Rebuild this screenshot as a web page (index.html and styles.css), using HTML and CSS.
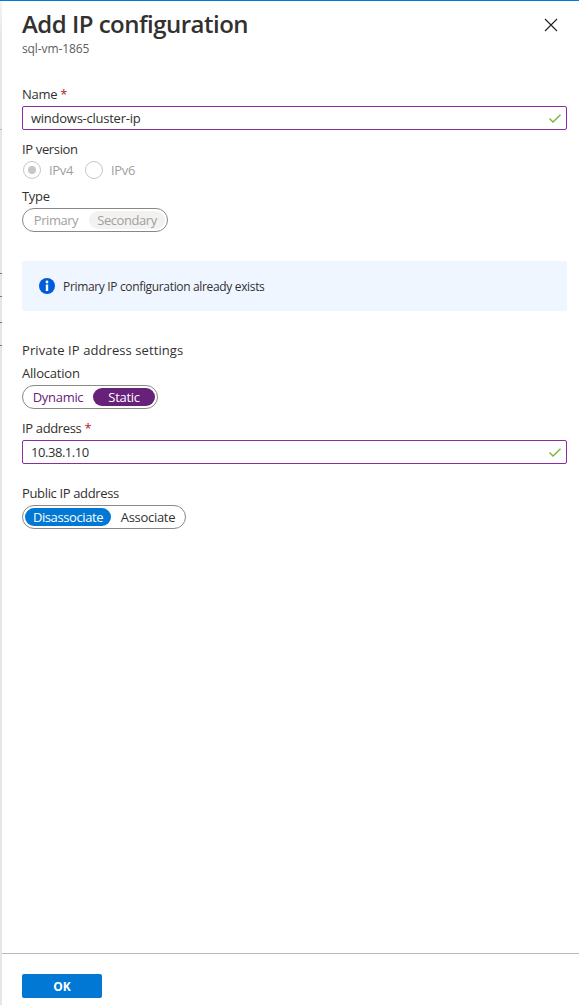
FILE: index.html
```html
<!DOCTYPE html>
<html lang="en">
<head>
<meta charset="utf-8">
<title>Add IP configuration</title>
<link rel="stylesheet" href="styles.css">
</head>
<body>
<div class="shell">
  <div class="underlay"></div>
  <section class="blade">
    <header class="header">
      <div>
        <h1 class="title">Add IP configuration</h1>
        <p class="subtitle">sql-vm-1865</p>
      </div>
      <svg class="close" width="14" height="14" viewBox="0 0 14 14"><path d="M1 1L13 13M13 1L1 13" stroke="#201f1e" stroke-width="1.1" fill="none"/></svg>
    </header>
    <main class="form">
      <label class="label">Name <span class="required">*</span></label>
      <div class="input"><span class="name-value">windows-cluster-ip</span>
        <svg width="12" height="9" viewBox="0 0 12 9"><path d="M.5 4.5L4 8L11.5.7" stroke="#73b532" stroke-width="1.3" fill="none"/></svg>
      </div>
      <div class="label version-label">IP version</div>
      <div class="radios">
        <span class="radio checked"></span><span class="radio-text">IPv4</span>
        <span class="radio"></span><span class="radio-text">IPv6</span>
      </div>
      <div class="label type-label">Type</div>
      <div class="toggle disabled"><span class="option primary">Primary</span><span class="option secondary selected">Secondary</span></div>
      <div class="info">
        <svg width="16" height="16" viewBox="0 0 16 16"><circle cx="8" cy="8" r="8" fill="#015cda"/><circle cx="8" cy="4" r="1.4" fill="#fff"/><rect x="6.8" y="6.5" width="2.4" height="6.5" fill="#fff"/></svg>
        <span class="info-text">Primary IP configuration already exists</span>
      </div>
      <h2 class="section-title">Private IP address settings</h2>
      <div class="label allocation-label">Allocation</div>
      <div class="toggle allocation"><span class="option dynamic">Dynamic</span><span class="option static selected">Static</span></div>
      <label class="label address-label">IP address <span class="required">*</span></label>
      <div class="input"><span class="address-value">10.38.1.10</span>
        <svg width="12" height="9" viewBox="0 0 12 9"><path d="M.5 4.5L4 8L11.5.7" stroke="#73b532" stroke-width="1.3" fill="none"/></svg>
      </div>
      <div class="label public-label">Public IP address</div>
      <div class="toggle public"><span class="option disassociate selected">Disassociate</span><span class="option associate">Associate</span></div>
    </main>
    <footer class="footer"><button class="ok">OK</button></footer>
  </section>
</div>
</body>
</html>
```
FILE: styles.css
```css
* { box-sizing: border-box; }
body {
  margin: 0;
  background: #fff;
  color: #323130;
  font: 13px/18px "Open Sans", "Noto Sans", sans-serif;
  letter-spacing: -0.3px;
}
.shell {
  display: flex;
  height: 1005px;
  border-top: 1px solid #0078d4;
}
.underlay {
  width: 2px;
  background:
    linear-gradient(#bbb, #bbb) 0 128px / 2px 1px no-repeat,
    linear-gradient(#777, #777) 0 272px / 2px 1px no-repeat,
    linear-gradient(#777, #777) 0 295px / 2px 1px no-repeat,
    linear-gradient(#777, #777) 0 321px / 2px 1px no-repeat,
    linear-gradient(#777, #777) 0 344px / 2px 1px no-repeat,
    linear-gradient(#f4f4f4, #e6e6e6 40px, #e6e6e6);
}
.blade { display: flex; flex: 1; flex-direction: column; }
.header {
  display: flex;
  justify-content: space-between;
  height: 84px;
  padding: 7px 21px 0 20px;
}
.title { margin: 0; font-size: 24px; line-height: 32px; font-weight: 600; letter-spacing: -0.52px; }
.subtitle { margin: 1px 0 0; color: #605e5c; font-size: 12px; line-height: 16px; letter-spacing: -0.1px; }
.close { margin-top: 10px; }
.form { flex: 1; padding: 0 12px 0 20px; }
.label { display: block; height: 21px; white-space: nowrap; }
.required { color: #a4262c; }
.input {
  display: flex;
  align-items: center;
  justify-content: space-between;
  height: 24px;
  padding: 0 5px 0 8px;
  border: 1px solid #8a2da5;
  border-radius: 2px;
}
.name-value { letter-spacing: -0.25px; }
.address-value { letter-spacing: -0.45px; }
.version-label { height: 20px; margin-top: 10px; letter-spacing: -0.35px; }
.radios { display: flex; align-items: center; height: 20px; color: #a19f9d; }
.radio {
  display: grid;
  place-items: center;
  width: 18px;
  height: 18px;
  margin: 0 8px 0 1px;
  border: 1px solid #c8c6c4;
  border-radius: 50%;
}
.checked::after { content: ""; width: 8px; height: 8px; border-radius: 50%; background: #c8c6c4; }
.radio-text { width: 35px; }
.type-label { height: 21px; margin-top: 7px; }
.toggle {
  display: flex;
  width: 146px;
  height: 24px;
  padding: 2px;
  border: 1px solid #8a8886;
  border-radius: 12px;
}
.option { display: flex; flex-shrink: 0; align-items: center; justify-content: center; border-radius: 9px; white-space: nowrap; }
.selected { background: #0078d4; color: #fff; }
.disabled .option { color: #a19f9d; letter-spacing: -0.45px; }
.disabled .selected { background: #f3f2f1; }
.primary { width: 64px; padding-right: 2px; }
.secondary { width: 76px; }
.info {
  display: flex;
  align-items: center;
  gap: 8px;
  height: 50px;
  margin-top: 29px;
  padding-left: 17px;
  border-radius: 2px;
  background: #eff6ff;
}
.info-text { padding-top: 2px; font-size: 12px; letter-spacing: -0.34px; }
.section-title { margin: 30px 0 0; height: 22px; font-size: 13px; line-height: 18px; font-weight: 400; letter-spacing: 0.08px; }
.allocation-label { margin-top: 1px; letter-spacing: -0.2px; }
.allocation { width: 136px; }
.dynamic { width: 68px; padding-right: 2px; color: #68217a; }
.static { width: 62px; background: #68217a; }
.address-label { margin-top: 10px; letter-spacing: -0.35px; }
.public-label { margin-top: 20px; letter-spacing: -0.35px; }
.public { width: 164px; }
.disassociate { width: 86px; letter-spacing: -0.4px; }
.associate { width: 74px; }
.footer { height: 52px; padding: 20px; border-top: 1px solid #bbb; }
.ok {
  display: block;
  width: 80px;
  height: 24px;
  padding: 0;
  border: 0;
  border-radius: 2px;
  background: #0078d4;
  color: #fff;
  font: 700 12px/23px "Open Sans", sans-serif;
}
```
